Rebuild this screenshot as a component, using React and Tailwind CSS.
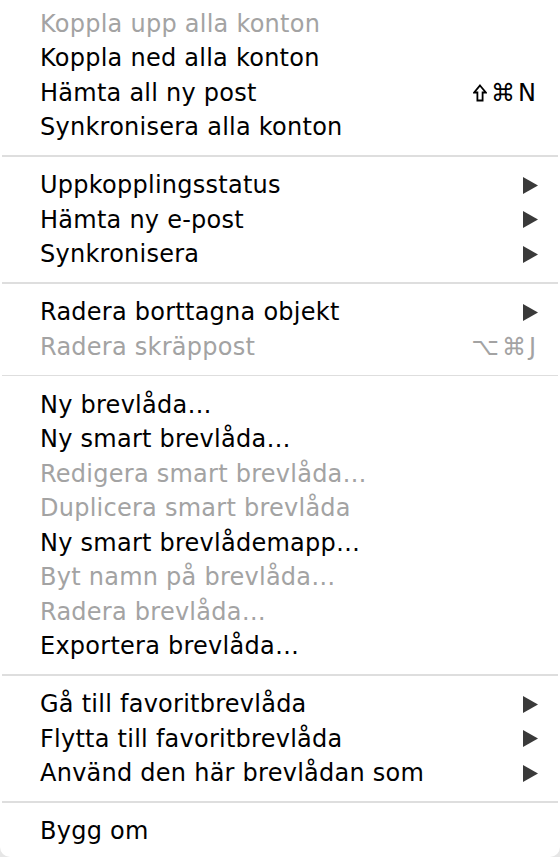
import React from 'react';

const Shift = () => (
    <svg width="14" height="18" viewBox="0 0 14 18" className="mr-[1px]">
        <path
            d="M7 1.5 L12.8 8.5 L9.6 8.5 L9.6 16.5 L4.4 16.5 L4.4 8.5 L1.2 8.5 Z"
            fill="none"
            stroke="currentColor"
            strokeWidth="1.8"
            strokeLinejoin="miter"
        />
    </svg>
);

const groups = [
    [
        { label: 'Koppla upp alla konton', disabled: true },
        { label: 'Koppla ned alla konton' },
        { label: 'Hämta all ny post', shortcut: [<Shift key="s" />, '⌘', 'N'] },
        { label: 'Synkronisera alla konton' },
    ],
    [
        { label: 'Uppkopplingsstatus', submenu: true },
        { label: 'Hämta ny e-post', submenu: true },
        { label: 'Synkronisera', submenu: true },
    ],
    [
        { label: 'Radera borttagna objekt', submenu: true },
        { label: 'Radera skräppost', disabled: true, shortcut: ['⌥', '⌘', 'J'] },
    ],
    [
        { label: 'Ny brevlåda…' },
        { label: 'Ny smart brevlåda…' },
        { label: 'Redigera smart brevlåda…', disabled: true },
        { label: 'Duplicera smart brevlåda', disabled: true },
        { label: 'Ny smart brevlådemapp…' },
        { label: 'Byt namn på brevlåda…', disabled: true },
        { label: 'Radera brevlåda…', disabled: true },
        { label: 'Exportera brevlåda…' },
    ],
    [
        { label: 'Gå till favoritbrevlåda', submenu: true },
        { label: 'Flytta till favoritbrevlåda', submenu: true },
        { label: 'Använd den här brevlådan som', submenu: true },
    ],
    [{ label: 'Bygg om' }],
];

const Arrow = () => (
    <svg width="15" height="17" viewBox="0 0 15 17" className="mr-[22px]">
        <path d="M0 0 L15 8.5 L0 17 Z" fill="#3a3a3a" />
    </svg>
);

const Item = ({ label, disabled, shortcut, submenu }) => (
    <div
        className={`h-[34.5px] flex items-center justify-between pl-[40px] text-[24px] leading-none pt-[1px] ${
            disabled ? 'text-[#a3a3a3]' : 'text-black'
        }`}
    >
        <span className="tracking-[0.25px]">{label}</span>
        {shortcut && (
            <span className="mr-[24px] flex items-center gap-[3px]">
                {shortcut.map((k, i) => (
                    <span key={i} className="flex items-center">
                        {k}
                    </span>
                ))}
            </span>
        )}
        {submenu && <Arrow />}
    </div>
);

const App = () => {
    return (
        <div className="w-[560px] h-[857px] bg-[#e6e6e6]">
            <div
                className="w-full h-full bg-white rounded-b-[10px] pt-[6px] pb-[9px]"
                style={{ fontFamily: '"DejaVu Sans", "Liberation Sans", sans-serif' }}
            >
                {groups.map((g, i) => (
                    <div key={i}>
                        {i > 0 && (
                            <div className="py-[11px] px-[2px]">
                                <div className="h-[1.5px] bg-[#dedede]" />
                            </div>
                        )}
                        {g.map((it) => (
                            <Item key={it.label} {...it} />
                        ))}
                    </div>
                ))}
            </div>
        </div>
    );
};

export default App;
